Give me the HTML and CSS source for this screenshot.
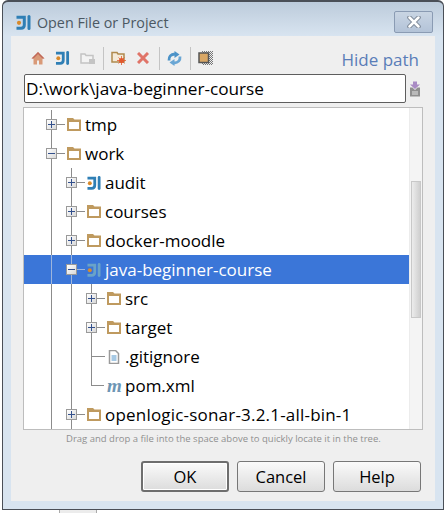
FILE: index.html
```html
<!DOCTYPE html>
<html lang="en">

<head>
    <meta charset="UTF-8">
    <meta name="viewport" content="width=device-width, initial-scale=1.0">
    <title>Open File or Project</title>
    <link rel="stylesheet" href="styles.css">
</head>

<body>
    <svg class="defs" width="0" height="0">
        <defs>
            <symbol id="folder" viewBox="0 0 14 13">
                <path d="M0 0h6l1.500 1.500H14V13H0z" fill="#bf9a5f" />
                <rect x="2" y="4" width="10" height="7" fill="#fff" />
            </symbol>
            <symbol id="idea" viewBox="0 0 15 15">
                <path d="M0.500 2.300h7.800v7.700q0 3.300-3.300 3.300H0.500" fill="none" stroke="currentColor" stroke-width="3" />
                <path d="M13 1.500v12" fill="none" stroke="currentColor" stroke-width="3" stroke-linecap="round" />
                <circle cx="3" cy="7.800" r="2.100" fill="#d98a2b" />
            </symbol>
        </defs>
    </svg>

    <main class="window">
        <header class="titlebar">
            <svg class="title-icon"><use href="#idea" /></svg>
            <span class="title-text">Open File or Project</span>
            <div class="close-btn">
                <svg width="14" height="12" viewBox="0 0 14 12">
                    <path d="M2.500 1.500l9 9M11.500 1.500l-9 9" stroke="#7a8594" stroke-width="4.500" stroke-linecap="round" />
                    <path d="M2.500 1.500l9 9M11.500 1.500l-9 9" stroke="#fff" stroke-width="2.500" stroke-linecap="round" />
                </svg>
            </div>
        </header>

        <section class="panel">
            <div class="toolbar">
                <svg class="tool tool-home" viewBox="0 0 14 14">
                    <path d="M7 1L0.500 7.500h2v6h3.500v-4h2v4h3.500v-6h2z" fill="#d99a78" />
                    <path d="M7 1L0.500 7.500h2L7 3l4.500 4.500h2z" fill="#c0685a" />
                </svg>
                <svg class="tool tool-idea"><use href="#idea" /></svg>
                <svg class="tool" viewBox="0 0 15 14">
                    <path d="M1 12V3h4l1 1.500h7V12z" fill="#f3f3f3" stroke="#c4c4c4" stroke-width="1.500" />
                    <rect x="9" y="8" width="6" height="5" fill="#c4c4c4" />
                </svg>
                <span class="sep"></span>
                <svg class="tool" viewBox="0 0 15 14">
                    <path d="M1 11V1.500h5l1 1.500h6v8z" fill="#f4ead8" stroke="#b08a4e" stroke-width="1.500" />
                    <circle cx="10.500" cy="9.500" r="2.500" fill="#e2592f" />
                    <path d="M10.500 5v9M6 9.500h9M7.500 6.500l6 6M13.500 6.500l-6 6" stroke="#e2592f" stroke-width="0.800" />
                </svg>
                <svg class="tool tool-del" viewBox="0 0 12 12">
                    <path d="M1 1l10 10M11 1L1 11" stroke="#e07468" stroke-width="3" />
                </svg>
                <span class="sep"></span>
                <svg class="tool tool-sync" viewBox="0 0 15 15">
                    <path d="M2 9.500Q1.500 3.500 8 3" fill="none" stroke="#4c93c8" stroke-width="2.800" />
                    <path d="M7.500 0L12.500 3.500L7.500 7z" fill="#4c93c8" />
                    <path d="M13 5.500Q13.500 11.500 7 12" fill="none" stroke="#6aa6d4" stroke-width="2.800" />
                    <path d="M7.500 8L2.500 11.500L7.500 15z" fill="#6aa6d4" />
                </svg>
                <span class="sep"></span>
                <svg class="tool" viewBox="0 0 15 14">
                    <defs>
                        <pattern id="checks" width="2" height="2" patternUnits="userSpaceOnUse">
                            <rect width="1" height="1" fill="#777" />
                            <rect x="1" y="1" width="1" height="1" fill="#777" />
                        </pattern>
                    </defs>
                    <rect x="4" y="0" width="11" height="14" fill="url(#checks)" />
                    <rect x="1" y="2" width="9.500" height="9.500" fill="#d9a765" stroke="#555" stroke-width="1.500" />
                </svg>
                <a class="hide-path">Hide path</a>
            </div>

            <div class="path-row">
                <input class="path-input" type="text" value="D:\work\java-beginner-course">
                <svg class="path-icon" width="12" height="16" viewBox="0 0 12 15">
                    <path d="M4 0h4v3h3L6 7.500 1 3h3z" fill="#a98bc4" />
                    <path d="M1 6h2.500L6 8.500 8.500 6H11v9H1z" fill="#8f8f8f" />
                    <path d="M3 10.500h6M3 12.500h6" stroke="#e4e4e4" />
                </svg>
            </div>

            <div class="tree-box">
                <div class="tree">
                    <div class="row">
                        <span class="cell line"><span class="toggle plus"></span></span>
                        <svg class="icon folder"><use href="#folder" /></svg>
                        <span class="label">tmp</span>
                    </div>
                    <div class="row">
                        <span class="cell line"><span class="toggle"></span></span>
                        <svg class="icon folder"><use href="#folder" /></svg>
                        <span class="label">work</span>
                    </div>
                    <div class="row">
                        <span class="cell line"></span>
                        <span class="cell line"><span class="toggle plus"></span></span>
                        <svg class="icon"><use href="#idea" /></svg>
                        <span class="label">audit</span>
                    </div>
                    <div class="row">
                        <span class="cell line"></span>
                        <span class="cell line"><span class="toggle plus"></span></span>
                        <svg class="icon folder"><use href="#folder" /></svg>
                        <span class="label">courses</span>
                    </div>
                    <div class="row">
                        <span class="cell line"></span>
                        <span class="cell line"><span class="toggle plus"></span></span>
                        <svg class="icon folder"><use href="#folder" /></svg>
                        <span class="label">docker-moodle</span>
                    </div>
                    <div class="row selected">
                        <span class="cell line"></span>
                        <span class="cell line"><span class="toggle"></span></span>
                        <svg class="icon"><use href="#idea" /></svg>
                        <span class="label">java-beginner-course</span>
                    </div>
                    <div class="row">
                        <span class="cell line"></span>
                        <span class="cell line"></span>
                        <span class="cell line"><span class="toggle plus"></span></span>
                        <svg class="icon folder"><use href="#folder" /></svg>
                        <span class="label">src</span>
                    </div>
                    <div class="row">
                        <span class="cell line"></span>
                        <span class="cell line"></span>
                        <span class="cell line"><span class="toggle plus"></span></span>
                        <svg class="icon folder"><use href="#folder" /></svg>
                        <span class="label">target</span>
                    </div>
                    <div class="row">
                        <span class="cell line"></span>
                        <span class="cell line"></span>
                        <span class="cell line"><span class="stub"></span></span>
                        <svg class="icon" viewBox="0 0 14 14">
                            <path d="M2.500 0.500h6l3 3v10h-9z" fill="#fff" stroke="#9a9a9a" stroke-width="1.500" />
                            <path d="M4.500 6h5M4.500 8h5M4.500 10h5" stroke="#4f93c9" />
                        </svg>
                        <span class="label">.gitignore</span>
                    </div>
                    <div class="row">
                        <span class="cell line"></span>
                        <span class="cell line"></span>
                        <span class="cell elbow"><span class="stub"></span></span>
                        <span class="icon maven">m</span>
                        <span class="label">pom.xml</span>
                    </div>
                    <div class="row">
                        <span class="cell line"></span>
                        <span class="cell line"><span class="toggle plus"></span></span>
                        <svg class="icon folder"><use href="#folder" /></svg>
                        <span class="label wide">openlogic-sonar-3.2.1-all-bin-1</span>
                    </div>
                </div>
                <div class="scrollbar">
                    <div class="thumb"></div>
                </div>
            </div>

            <p class="hint">Drag and drop a file into the space above to quickly locate it in the tree.</p>

            <div class="buttons">
                <button class="btn default">OK</button>
                <button class="btn">Cancel</button>
                <button class="btn">Help</button>
            </div>
        </section>
    </main>
    <div class="below"></div>
</body>

</html>
```

FILE: styles.css
```css
html, body {
    margin: 0;
    padding: 0;
    height: 513px;
    overflow: hidden;
    background-color: #ffffff;
    font-family: 'Open Sans', sans-serif;
}

.defs {
    display: block;
    height: 0;
}

.window {
    box-sizing: border-box;
    width: 442px;
    height: 510px;
    margin-left: 2px;
    padding: 0 8px 8px 8px;
    border: 1px solid #4a4f57;
    border-width: 2px 1px 1px 1px;
    border-radius: 6px 6px 0 0;
    background: linear-gradient(180deg, #bccbdb 0, #d8e4f0 34px);
}

.titlebar {
    display: flex;
    align-items: center;
    box-sizing: border-box;
    height: 34px;
    padding-top: 6px;
}

.title-icon {
    flex: none;
    width: 15px;
    height: 15px;
    margin: 0 6px 0 5px;
    color: #2f7fb5;
}

.title-text {
    font-size: 14.3px;
    color: #4b5863;
}

.close-btn {
    display: flex;
    align-items: center;
    justify-content: center;
    box-sizing: border-box;
    width: 39px;
    height: 22px;
    margin-left: auto;
    margin-right: 2px;
    border: 1px solid #8a9bb3;
    border-radius: 2px;
    background: linear-gradient(180deg, #c9d5e3, #b3c3d8);
}

.panel {
    height: 465px;
    padding: 0 0 0 12px;
    background-color: #efefef;
}

.toolbar {
    display: flex;
    align-items: center;
    box-sizing: border-box;
    height: 38px;
    padding: 6px 16px 0 8px;
}

.tool {
    flex: none;
    width: 15px;
    height: 14px;
    margin-right: 10px;
    color: #2f7fb5;
}

.tool-home {
    width: 14px;
}

.tool-del {
    width: 12px;
    height: 12px;
    margin-right: 12px;
    margin-left: 1px;
}

.tool-sync {
    height: 15px;
}

.sep {
    flex: none;
    width: 1px;
    height: 23px;
    margin: 0 7px 0 -2px;
    background-color: #c4c4c4;
}

.hide-path {
    margin-left: auto;
    padding-top: 2px;
    font-size: 17px;
    color: #5a7db8;
}

.path-row {
    display: flex;
    align-items: center;
    height: 29px;
    padding-left: 1px;
}

.path-input {
    box-sizing: border-box;
    width: 382px;
    height: 29px;
    padding: 0 1px;
    border: 1px solid #5e5e5e;
    border-radius: 2px;
    font-family: inherit;
    font-size: 17.2px;
    color: #000000;
}

.path-icon {
    margin-left: 3px;
}

.tree-box {
    display: flex;
    box-sizing: border-box;
    width: 400px;
    height: 323px;
    margin-top: 4px;
    border: 1px solid #bdbdbd;
    background-color: #ffffff;
}

.tree {
    flex: 1;
    padding-top: 2px;
    overflow: hidden;
}

.row {
    display: flex;
    align-items: center;
    height: 29px;
    padding-left: 27px;
}

.row.selected {
    background-color: #3b76d8;
}

.cell {
    position: relative;
    display: block;
    flex: none;
    box-sizing: border-box;
    width: 20px;
    height: 29px;
}

.cell.line {
    border-left: 1px solid #8c8c8c;
}

.selected .cell.line {
    border-left-color: #9db5dd;
}

.cell.elbow::before {
    content: "";
    display: block;
    height: 15px;
    border-left: 1px solid #8c8c8c;
}

.toggle {
    position: absolute;
    top: 9px;
    left: -6px;
    z-index: 1;
    box-sizing: border-box;
    width: 11px;
    height: 11px;
    border: 1px solid #9a9a9a;
    background: linear-gradient(135deg, #ffffff, #d8d8d8);
}

.toggle::before {
    content: "";
    position: absolute;
    top: 4px;
    left: 1px;
    width: 7px;
    height: 1px;
    background-color: #33508c;
}

.toggle.plus::after {
    content: "";
    position: absolute;
    top: 1px;
    left: 4px;
    width: 1px;
    height: 7px;
    background-color: #33508c;
}

.stub {
    position: absolute;
    top: 14px;
    left: 0;
    width: 13px;
    height: 1px;
    background-color: #8c8c8c;
}

.cell:has(.toggle)::after {
    content: "";
    position: absolute;
    top: 14px;
    left: 5px;
    width: 8px;
    height: 1px;
    background-color: #8c8c8c;
}

.selected .cell:has(.toggle)::after {
    background-color: #9db5dd;
}

.icon {
    flex: none;
    width: 14px;
    height: 14px;
    margin-left: -4px;
    color: #2f7fb5;
}

.icon.folder {
    height: 13px;
}

.selected .icon {
    color: #6aa3c8;
}

.maven {
    font-family: 'Liberation Serif', serif;
    font-size: 19px;
    font-weight: bold;
    font-style: italic;
    line-height: 14px;
    color: #6d96b4;
}

.label {
    margin-left: 4px;
    font-size: 17px;
    white-space: nowrap;
    color: #000000;
}

.label.wide {
    letter-spacing: 0.2px;
}

.selected .label {
    color: #ffffff;
}

.scrollbar {
    flex: none;
    box-sizing: border-box;
    width: 13px;
    padding: 73px 1px 0 1px;
    background-color: #f4f4f4;
    border-left: 1px solid #ececec;
}

.thumb {
    height: 135px;
    border: 1px solid #c8c8c8;
    background: linear-gradient(90deg, #ececec, #cfcfcf);
}

.hint {
    margin: 2px 0 0 43px;
    font-size: 9.5px;
    line-height: 13px;
    white-space: nowrap;
    color: #8f8f8f;
}

.buttons {
    display: flex;
    gap: 8px;
    margin-top: 16px;
    padding-left: 118px;
}

.btn {
    box-sizing: border-box;
    width: 88px;
    height: 31px;
    padding: 0;
    border: 1px solid #777777;
    border-radius: 3px;
    background: linear-gradient(180deg, #fafafa, #dcdcdc);
    font-family: inherit;
    font-size: 16.5px;
    color: #000000;
}

.btn.default {
    border: 2px solid #6e6e6e;
    box-shadow: inset 0 0 0 1px #ffffff;
}

.below {
    box-sizing: border-box;
    width: 38px;
    height: 3px;
    margin-left: 59px;
    border: solid #aaaaaa;
    border-width: 0 1px;
    background-color: #ececec;
}
```
